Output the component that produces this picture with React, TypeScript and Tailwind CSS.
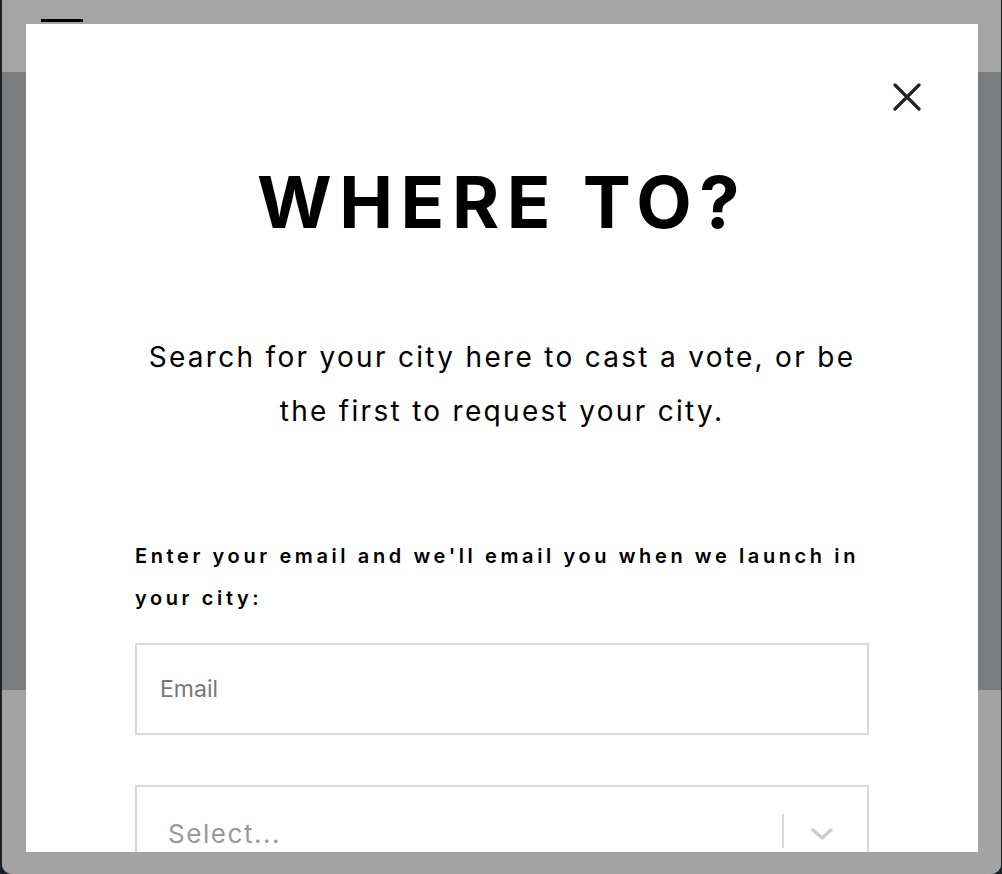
import React from 'react'

const font = { fontFamily: 'Inter, "Noto Sans", sans-serif' }

const App = () => {
  return (
    <div className="h-[874px] w-[1002px] overflow-hidden bg-[#1b2024]" style={font}>
      <div className="relative ml-[2px] mr-[1px] flex h-[874px] flex-col overflow-hidden rounded-b-[10px] bg-[#a4a4a4]">
        {/* page behind the overlay */}
        <div className="relative h-[72px] bg-[#a4a4a4]">
          <div className="absolute left-[39px] top-[19px] h-[3px] w-[42px] bg-black" />
        </div>
        <div className="h-[618px] bg-[#7b7c7e]" />
        <div className="flex-1 bg-[#a3a3a3]" />

        {/* modal */}
        <div className="absolute left-[24px] top-[24px] h-[828px] w-[952px] overflow-hidden bg-white">
          <div className="flex justify-end pr-[57px] pt-[59px]">
            <button className="h-[28px] w-[28px] text-[#222]">
              <svg viewBox="0 0 28 28" width="28" height="28" fill="none" stroke="currentColor" strokeWidth="3.2" strokeLinecap="round">
                <path d="M2 2 L26 26 M26 2 L2 26" />
              </svg>
            </button>
          </div>
          <div className="px-[109px]">
            <h1 className="mt-[55px] text-center text-[72px] font-bold leading-none tracking-[7.6px] text-black">
              WHERE TO?
            </h1>
            <p className="mt-[92px] text-center text-[28px] leading-[54px] tracking-[2.3px] text-black">
              Search for your city here to cast a vote, or be
              <br />
              the first to request your city.
            </p>
            <label className="mt-[97px] block text-[20px] font-semibold leading-[42px] tracking-[3.6px] text-black">
              Enter your email and we'll email you when we launch in your city:
            </label>
            <div className="mt-[24px] flex h-[92px] items-center border-2 border-[#d9d9d9] px-[23px]">
              <span className="text-[23px] text-[#777]">Email</span>
            </div>
            <div className="mt-[50px] flex h-[92px] border-2 border-[#d9d9d9]">
              <div className="flex flex-1 items-center pl-[31px] pt-[4px]">
                <span className="text-[26px] tracking-[0.06em] text-[#999]">Select...</span>
              </div>
              <div className="my-[27px] flex w-[85px] items-center justify-center border-l-2 border-[#d9d9d9] pr-[8px] pt-[6px]">
                <svg viewBox="0 0 24 14" width="24" height="14" fill="none" stroke="#cccccc" strokeWidth="3.5" strokeLinecap="round" strokeLinejoin="round">
                  <path d="M3 3 L12 11 L21 3" />
                </svg>
              </div>
            </div>
          </div>
        </div>
      </div>
    </div>
  )
}

export default App
